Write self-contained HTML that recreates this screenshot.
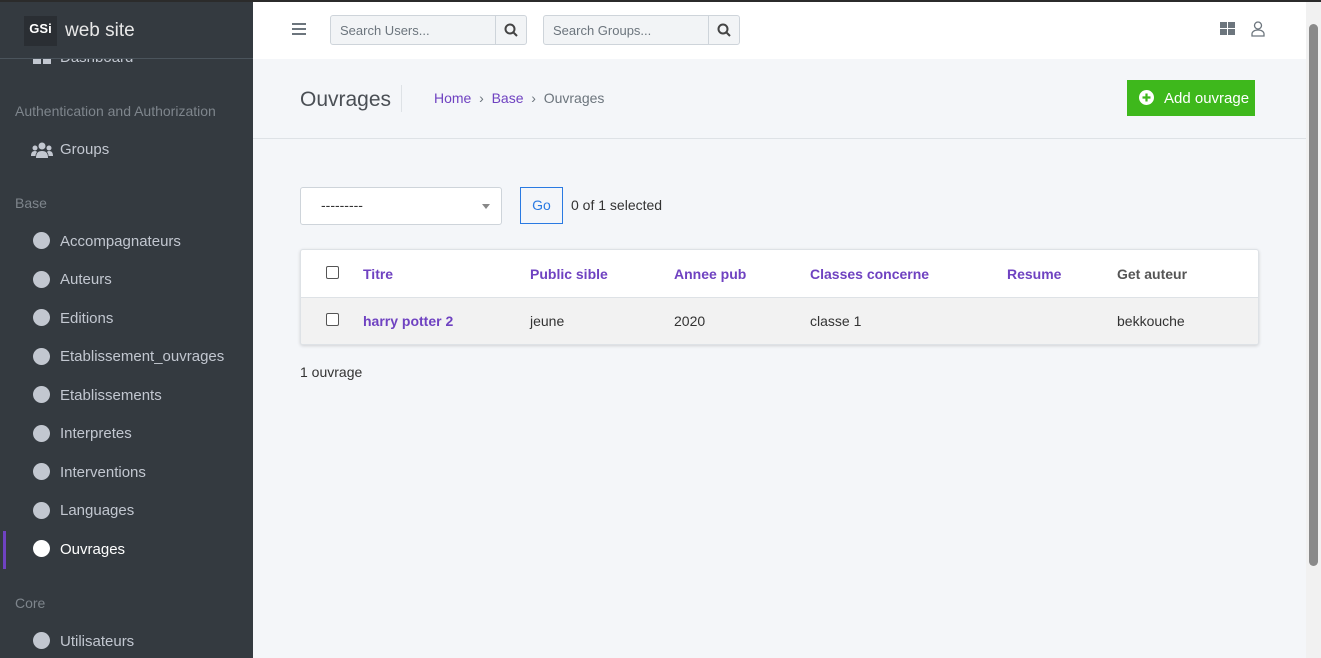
<!DOCTYPE html>
<html><head><meta charset="utf-8"><style>
*{box-sizing:border-box;margin:0;padding:0}
body{width:1321px;height:658px;overflow:hidden;background:#2b2b2b;font-family:"Liberation Sans",sans-serif;font-size:14px;position:relative}
.side{position:absolute;left:0;top:0;width:253px;height:658px;background:#343a40;color:#c2c7d0;border-top:2px solid #2b2b2b}
.brand{position:absolute;left:0;top:0;width:253px;height:57px;border-bottom:1px solid #4b545c;background:#343a40;z-index:2}
.logo{position:absolute;left:24px;top:14px;width:33px;height:30px;background:#2a2e33;color:#fff;font-weight:bold;font-size:13px;line-height:26px;text-align:center}
.brand .t{position:absolute;left:65px;top:18px;font-size:19px;color:#e8e8e8}
.hdr{position:absolute;left:15px;font-size:14px;color:#7e858c}
.it{position:absolute;left:60px;font-size:15px;color:#c2c7d0}
.dot{position:absolute;left:33px;width:17px;height:17px;border-radius:50%;background:#c2c7d0}
.main{position:absolute;left:253px;top:2px;width:1053px;height:656px;background:#f4f6f9}
.top{height:57px;background:#fff;position:relative}
.search{position:absolute;top:13px;height:30px;border:1px solid #ced4da;background:#f2f4f6;border-radius:3px;width:197px}
.search span{position:absolute;left:9px;top:7px;font-size:13px;color:#6c757d}
.search b{position:absolute;right:0;top:0;width:31px;height:28px;border-left:1px solid #ced4da}
.sb{position:absolute;left:1306px;top:2px;width:15px;height:656px;background:#f1f1f1}
.sb i{position:absolute;left:3px;top:22px;width:9px;height:542px;background:#8a8a8a;border-radius:5px}
</style></head><body>
<div class="side">
<svg style="position:absolute;left:33px;top:52px" width="18" height="10" fill="#c2c7d0"><rect x="0" y="0" width="8" height="10"/><rect x="10" y="0" width="8" height="10"/></svg>
<div class="brand"><div class="logo">GSi</div><div class="t">web site</div></div>
<div class="it" style="top:47px">Dashboard</div>
<div class="hdr" style="top:101px">Authentication and Authorization</div>
<svg style="position:absolute;left:31px;top:140px" width="22" height="16" viewBox="0 0 22 16" fill="#c2c7d0"><circle cx="11" cy="4" r="3.5"/><circle cx="4" cy="6" r="2.5"/><circle cx="18" cy="6" r="2.5"/><path d="M5 16c0-5 2-7 6-7s6 2 6 7z"/><path d="M0 14c0-3 1-5 4-5 1 0 2 .5 2 1-1 1-1.5 2.5-1.5 4z"/><path d="M22 14c0-3-1-5-4-5-1 0-2 .5-2 1 1 1 1.5 2.5 1.5 4z"/></svg>
<div class="it" style="top:139px">Groups</div>
<div class="hdr" style="top:193px">Base</div>
<div class="dot" style="top:230px"></div><div class="it" style="top:231px">Accompagnateurs</div>
<div class="dot" style="top:269px"></div><div class="it" style="top:269px">Auteurs</div>
<div class="dot" style="top:307px"></div><div class="it" style="top:308px">Editions</div>
<div class="dot" style="top:346px"></div><div class="it" style="top:346px">Etablissement_ouvrages</div>
<div class="dot" style="top:384px"></div><div class="it" style="top:385px">Etablissements</div>
<div class="dot" style="top:423px"></div><div class="it" style="top:423px">Interpretes</div>
<div class="dot" style="top:461px"></div><div class="it" style="top:462px">Interventions</div>
<div class="dot" style="top:500px"></div><div class="it" style="top:500px">Languages</div>
<div style="position:absolute;left:3px;top:529px;width:3px;height:38px;background:#6f42c1"></div>
<div class="dot" style="top:538px;background:#fff"></div><div class="it" style="top:539px;color:#fff">Ouvrages</div>
<div class="hdr" style="top:593px">Core</div>
<div class="dot" style="top:630px"></div><div class="it" style="top:631px">Utilisateurs</div>
</div>
<div class="main">
<div class="top">
<svg style="position:absolute;left:39px;top:21px" width="14" height="12"><path d="M0 1h14M0 6h14M0 11h14" stroke="#6c757d" stroke-width="2"/></svg>
<div class="search" style="left:77px"><span>Search Users...</span><b><svg style="margin:7px 8px" width="14" height="14"><circle cx="6" cy="6" r="4.5" fill="none" stroke="#444" stroke-width="2"/><path d="M9.5 9.5l3.5 3.5" stroke="#444" stroke-width="2"/></svg></b></div>
<div class="search" style="left:290px"><span>Search Groups...</span><b><svg style="margin:7px 8px" width="14" height="14"><circle cx="6" cy="6" r="4.5" fill="none" stroke="#444" stroke-width="2"/><path d="M9.5 9.5l3.5 3.5" stroke="#444" stroke-width="2"/></svg></b></div>
<svg style="position:absolute;left:967px;top:20px" width="16" height="14" fill="#6c757d"><rect x="0" y="0" width="7" height="6"/><rect x="8" y="0" width="7" height="6"/><rect x="0" y="7" width="7" height="6"/><rect x="8" y="7" width="7" height="6"/></svg>
<svg style="position:absolute;left:998px;top:19px" width="14" height="16" fill="none" stroke="#6c757d" stroke-width="1.3"><circle cx="7" cy="4.5" r="3.5"/><path d="M1 15v-2c0-2 2-4 6-4s6 2 6 4v2z"/></svg>
</div>
<div style="position:absolute;left:0;top:57px;width:1053px;height:80px;border-bottom:1px solid #dee2e6">
<div style="position:absolute;left:47px;top:29px;font-size:21px;color:#4a4f55">Ouvrages</div>
<div style="position:absolute;left:148px;top:26px;width:1px;height:27px;background:#dee2e6"></div>
<div style="position:absolute;left:181px;top:31px;font-size:14px;color:#6f42c1">Home <span style="color:#6c757d">&nbsp;›&nbsp;</span> Base <span style="color:#6c757d">&nbsp;›&nbsp; Ouvrages</span></div>
<div style="position:absolute;left:874px;top:21px;width:128px;height:36px;background:#3eb81c;color:#fff;font-size:15px;line-height:38px;padding-left:37px">Add ouvrage
<svg style="position:absolute;left:12px;top:10px" width="15" height="15"><circle cx="7.5" cy="7.5" r="7.5" fill="#fff"/><path d="M7.5 3.5v8M3.5 7.5h8" stroke="#3eb81c" stroke-width="2.2"/></svg></div>
</div>
<div style="position:absolute;left:47px;top:185px;width:202px;height:38px;background:#fff;border:1px solid #ced4da;border-radius:3px"><span style="position:absolute;left:20px;top:9px;color:#333">---------</span><span style="position:absolute;right:11px;top:16px;border:4px solid transparent;border-top:5px solid #888"></span></div>
<div style="position:absolute;left:267px;top:185px;width:43px;height:37px;border:1px solid #2a7ae2;color:#2a7ae2;text-align:center;line-height:35px">Go</div>
<div style="position:absolute;left:318px;top:195px;color:#333">0 of 1 selected</div>
<div style="position:absolute;left:47px;top:247px;width:959px;height:96px;background:#fff;border:1px solid #dee2e6;border-radius:3px;box-shadow:0 1px 3px rgba(0,0,0,.15);overflow:hidden">
<div style="position:absolute;left:0;top:47px;width:959px;height:49px;background:#f2f2f2;border-top:1px solid #dee2e6"></div>
<div style="font-weight:bold;color:#6f42c1;position:absolute;top:16px;left:0;width:959px">
<span style="position:absolute;left:25px;top:0;width:13px;height:13px;border:1px solid #555;border-radius:2px;background:#fff"></span>
<span style="position:absolute;left:62px">Titre</span><span style="position:absolute;left:229px">Public sible</span><span style="position:absolute;left:373px">Annee pub</span><span style="position:absolute;left:509px">Classes concerne</span><span style="position:absolute;left:706px">Resume</span><span style="position:absolute;left:816px;color:#555">Get auteur</span></div>
<div style="color:#333;position:absolute;top:63px;left:0;width:959px">
<span style="position:absolute;left:25px;top:0;width:13px;height:13px;border:1px solid #555;border-radius:2px;background:#fff"></span>
<span style="position:absolute;left:62px;font-weight:bold;color:#6f42c1">harry potter 2</span><span style="position:absolute;left:229px">jeune</span><span style="position:absolute;left:373px">2020</span><span style="position:absolute;left:509px">classe 1</span><span style="position:absolute;left:816px">bekkouche</span></div>
</div>
<div style="position:absolute;left:47px;top:362px;color:#333">1 ouvrage</div>
</div>
<div class="sb"><i></i></div>
</body></html>
